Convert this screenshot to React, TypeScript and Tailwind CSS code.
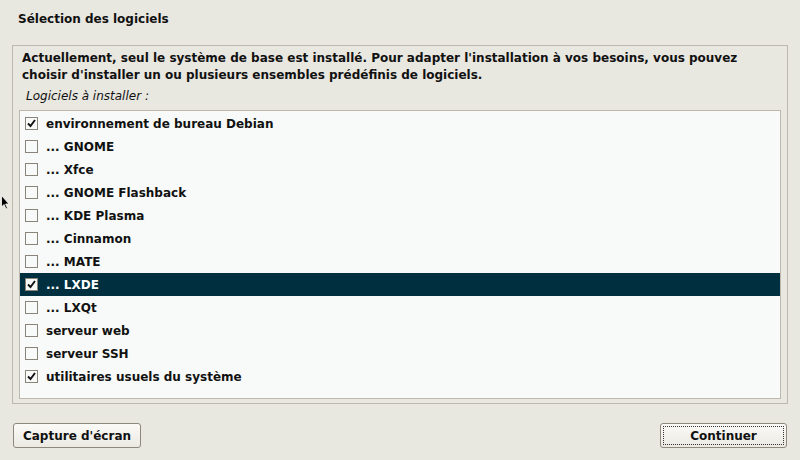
import React from 'react';

const items = [
  { label: 'environnement de bureau Debian', checked: true },
  { label: '... GNOME', checked: false },
  { label: '... Xfce', checked: false },
  { label: '... GNOME Flashback', checked: false },
  { label: '... KDE Plasma', checked: false },
  { label: '... Cinnamon', checked: false },
  { label: '... MATE', checked: false },
  { label: '... LXDE', checked: true, selected: true },
  { label: '... LXQt', checked: false },
  { label: 'serveur web', checked: false },
  { label: 'serveur SSH', checked: false },
  { label: 'utilitaires usuels du système', checked: true },
];

function Box({ checked }: { checked: boolean }) {
  return (
    <div className="w-[13px] h-[13px] border border-[#8a8578] bg-[#f7faf8] flex items-center justify-center shrink-0">
      {checked && (
        <svg width="11" height="11" viewBox="0 0 11 11">
          <path d="M2 5.5 L4.5 8 L9 2" fill="none" stroke="#111" strokeWidth="1.9" />
        </svg>
      )}
    </div>
  );
}

export default function App() {
  return (
    <div
      className="relative w-[800px] h-[460px] bg-[#e8e7e0] text-[#111] overflow-hidden"
      style={{ fontFamily: '"DejaVu Sans", sans-serif' }}
    >
      <h1 className="absolute left-[18px] top-[10px] text-[12px] font-bold leading-[18px]">
        Sélection des logiciels
      </h1>

      {/* cadre principal */}
      <div className="absolute left-[12px] top-[45px] w-[776px] h-[359px] border border-[#bdb8ab] px-[6px] pt-[4px]">
        <p className="text-[12px] font-bold leading-[17px] px-[3px]">
          Actuellement, seul le système de base est installé. Pour adapter l'installation à vos besoins, vous pouvez
          choisir d'installer un ou plusieurs ensembles prédéfinis de logiciels.
        </p>
        <p className="text-[12px] italic leading-[17px] pl-[7px] mt-[4px]">Logiciels à installer :</p>

        <div className="mt-[5px] w-[762px] h-[289px] border border-[#bdb8ab] bg-[#f7faf8] pt-px">
          {items.map((it) => (
            <div
              key={it.label}
              className={
                'h-[23px] flex items-center gap-[8px] pl-[5px] ' +
                (it.selected ? 'bg-[#00303f] text-white' : '')
              }
            >
              <Box checked={it.checked} />
              <span className="text-[12px] font-bold">{it.label}</span>
            </div>
          ))}
        </div>
      </div>

      <div className="absolute left-[13px] right-[13px] top-[423px] flex justify-between">
        <button className="w-[128px] h-[25px] rounded-[3px] border border-[#8d887c] bg-gradient-to-b from-[#fbfaf7] to-[#ebe9e2] text-[12px] font-bold">
          Capture d'écran
        </button>
        <button className="w-[127px] h-[25px] rounded-[3px] border border-[#8d887c] bg-gradient-to-b from-[#fbfaf7] to-[#ebe9e2] text-[12px] font-bold p-[2px]">
          <div className="w-full h-full border border-dotted border-[#333] flex items-center justify-center">
            Continuer
          </div>
        </button>
      </div>

      {/* pointeur de souris */}
      <svg className="absolute left-[1px] top-[195px]" width="10" height="16" viewBox="0 0 10 16">
        <path d="M0.5 0.5 L0.5 12 L3 9.5 L5 14 L6.5 13.3 L4.6 9 L8 9 Z" fill="#000" stroke="#fff" strokeWidth="0.8" />
      </svg>
    </div>
  );
}
